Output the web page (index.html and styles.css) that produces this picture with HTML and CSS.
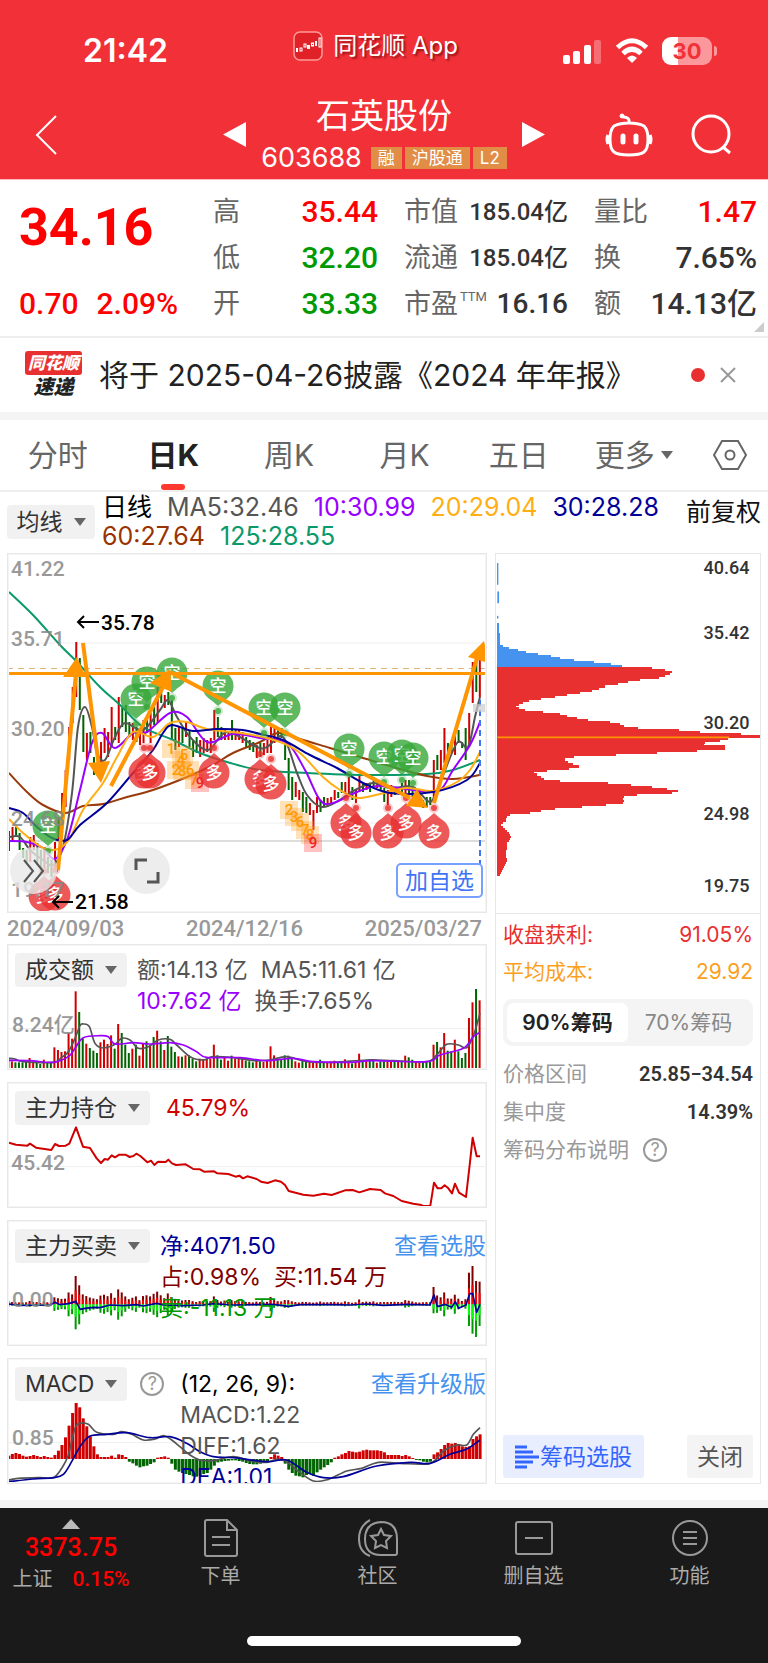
FILE: index.html
```html
<!DOCTYPE html>
<html lang="zh-CN">
<head>
<meta charset="utf-8">
<meta name="viewport" content="width=device-width, initial-scale=1">
<title>石英股份 603688</title>
<link rel="stylesheet" href="styles.css">
</head>
<body>
<header class="top">
  <div class="status">
    <span class="clock">21:42</span>
    <span class="app-name">
      <svg width="30" height="30" viewBox="0 0 30 30"><rect x="1" y="1" width="28" height="28" rx="6" fill="#e02228" stroke="#ff9a96" stroke-width="1.5"/><g fill="#fff"><rect x="3" y="17" width="2" height="4"/><rect x="14" y="14" width="3" height="4"/><rect x="22" y="10" width="2" height="5"/></g><g fill="none" stroke="#fff"><rect x="7" y="17" width="2" height="3"/><rect x="11" y="13" width="2" height="3"/><rect x="18.500" y="12" width="2" height="3"/><rect x="26" y="7" width="2" height="9"/></g></svg>
      <span>同花顺 App</span>
    </span>
    <span class="signals">
      <svg width="40" height="27" viewBox="0 0 40 27" fill="#fff"><rect x="1" y="17" width="7" height="9" rx="2"/><rect x="11" y="13" width="7" height="13" rx="2"/><rect x="22" y="7" width="7" height="19" rx="2"/><rect x="32" y="2" width="7" height="24" rx="2" opacity=".3"/></svg>
      <svg width="34" height="26" viewBox="0 0 34 26" fill="none" stroke="#fff" stroke-width="5"><path d="M2.500 9.500Q17-4 31.500 9.500"/><path d="M8 15.500Q17 7 26 15.500"/><path d="M17 25l-5-5q5-5 10 0z" fill="#fff" stroke="none"/></svg>
      <span class="battery">30</span>
    </span>
  </div>
  <div class="nav">
    <button class="icon-btn" aria-label="返回"><svg width="22" height="40" viewBox="0 0 22 40" fill="none" stroke="#fff" stroke-width="2"><path d="M21 1L2 20l19 19"/></svg></button>
    <div class="stock">
      <button class="icon-btn" aria-label="上一只"><svg width="23" height="25" viewBox="0 0 23 25"><path d="M23 0v25L0 12.500z" fill="#fff"/></svg></button>
      <div class="stock-id">
        <h1>石英股份</h1>
        <p><span class="code">603688</span><span class="tag">融</span><span class="tag">沪股通</span><span class="tag">L2</span></p>
      </div>
      <button class="icon-btn" aria-label="下一只"><svg width="23" height="25" viewBox="0 0 23 25"><path d="M0 0v25l23-12.500z" fill="#fff"/></svg></button>
    </div>
    <div class="nav-tools">
      <button class="icon-btn" aria-label="助手"><svg width="48" height="44" viewBox="0 0 48 44" fill="none" stroke="#fff" stroke-width="3"><path d="M9 13Q15 10 24 10t15 3Q43 17 43 26q0 10-4 13-4 3-15 3T9 39Q5 36 5 26q0-9 4-13zM24 10Q25 4 18 4M3 22q-2 4 0 9M45 22q2 4 0 9"/><circle cx="17" cy="3" r="2" fill="#fff" stroke-width="1"/><path d="M18 23v6M31 23v6" stroke-width="5" stroke-linecap="round"/></svg></button>
      <button class="icon-btn" aria-label="搜索"><svg width="42" height="42" viewBox="0 0 42 42" fill="none" stroke="#fff" stroke-width="3"><circle cx="20" cy="20" r="18"/><path d="M32 33l7 6"/></svg></button>
    </div>
  </div>
</header>

<main>
<section class="quote">
  <div class="price">
    <strong>34.16</strong>
    <p><span>0.70</span><span>2.09%</span></p>
  </div>
  <dl class="stats">
    <div><dt>高</dt><dd class="up">35.44</dd></div>
    <div><dt>低</dt><dd class="down">32.20</dd></div>
    <div><dt>开</dt><dd class="down">33.33</dd></div>
  </dl>
  <dl class="stats">
    <div><dt>市值</dt><dd class="small">185.04亿</dd></div>
    <div><dt>流通</dt><dd class="small">185.04亿</dd></div>
    <div><dt>市盈<sup>TTM</sup></dt><dd class="medium">16.16</dd></div>
  </dl>
  <dl class="stats">
    <div><dt>量比</dt><dd class="up">1.47</dd></div>
    <div><dt>换</dt><dd>7.65%</dd></div>
    <div><dt>额</dt><dd>14.13亿</dd></div>
  </dl>
</section>

<section class="news">
  <span class="news-logo"><b>同花顺</b><i>速递</i></span>
  <a href="#news">将于 2025-04-26披露《2024 年年报》</a>
  <span class="dot"></span>
  <button class="icon-btn" aria-label="关闭公告"><svg width="16" height="16" viewBox="0 0 16 16" stroke="#999" stroke-width="2"><path d="M1 1l14 14M15 1L1 15"/></svg></button>
</section>

<nav class="tabs">
  <button>分时</button><button class="active">日K</button><button>周K</button><button>月K</button><button>五日</button><button>更多<span class="caret"></span></button>
  <button aria-label="设置"><svg width="34" height="32" viewBox="0 0 34 32" fill="none" stroke="#666" stroke-width="2"><path d="M9 2h16l8 14-8 14H9L1 16z"/><circle cx="17" cy="16" r="4.500"/></svg></button>
</nav>

<section class="legend">
  <button class="picker">均线<span class="caret"></span></button>
  <p><span class="c-black">日线</span><span>MA5:32.46</span><span class="c-purple">10:30.99</span><span class="c-yellow">20:29.04</span><span class="c-navy">30:28.28</span><span class="c-brown">60:27.64</span><span class="c-teal">125:28.55</span></p>
  <button class="adjust">前复权</button>
</section>

<div class="board">
  <div class="charts">
    <section class="panel kline">
      <svg id="kline" viewBox="8 554 478 358"></svg>
      <button class="round more" aria-label="展开"><svg width="24" height="24" viewBox="0 0 24 24" fill="none" stroke="#555" stroke-width="2"><path d="M2 1l9 11-9 11M12 1l9 11-9 11"/></svg></button>
      <button class="round full" aria-label="全屏"><svg width="26" height="26" viewBox="0 0 26 26" fill="none" stroke="#555" stroke-width="3"><path d="M2 12V2h11M24 14v10H13"/></svg></button>
      <button class="add">加自选</button>
    </section>
    <div class="dates"><span>2024/09/03</span><span>2024/12/16</span><span>2025/03/27</span></div>
    <section class="panel">
      <svg id="volume" viewBox="24 45 1434 372"></svg>
      <div class="info">
        <button class="picker">成交额<span class="caret"></span></button>
        <p><span>额:14.13 亿</span><span>MA5:11.61 亿</span><br><span class="c-purple">10:7.62 亿</span><span>换手:7.65%</span></p>
      </div>
    </section>
    <section class="panel">
      <svg id="holding" viewBox="24 24 1434 372"></svg>
      <div class="info">
        <button class="picker">主力持仓<span class="caret"></span></button>
        <p class="inset"><span class="c-red">45.79%</span></p>
      </div>
    </section>
    <section class="panel">
      <svg id="flow" viewBox="24 438 1434 372"></svg>
      <div class="info">
        <button class="picker">主力买卖<span class="caret"></span></button>
        <p><span class="c-navy">净:4071.50</span><br><span class="c-maroon">占:0.98%</span><span class="c-maroon">买:11.54 万</span><br><span class="c-green">卖:-11.13 万</span></p>
        <a href="#pick">查看选股</a>
      </div>
    </section>
    <section class="panel">
      <svg id="macd" viewBox="24 42 1434 372"></svg>
      <div class="info">
        <button class="picker">MACD<span class="caret"></span></button>
        <button class="help" aria-label="MACD说明">?</button>
        <p class="inset"><span class="c-black">(12, 26, 9):</span><br><span>MACD:1.22</span><br><span>DIFF:1.62</span><br><span class="c-navy">DEA:1.01</span></p>
        <a href="#upgrade">查看升级版</a>
      </div>
    </section>
  </div>

  <aside class="chips">
    <svg id="chips" viewBox="46 43 789 1074"></svg>
    <div class="chip-info">
      <p class="profit"><span>收盘获利:</span><span>91.05%</span></p>
      <p class="cost"><span>平均成本:</span><span>29.92</span></p>
      <div class="segment"><button class="active">90%筹码</button><button>70%筹码</button></div>
      <p><span>价格区间</span><b>25.85−34.54</b></p>
      <p><span>集中度</span><b>14.39%</b></p>
      <p class="explain"><span>筹码分布说明</span><button class="help" aria-label="筹码分布说明">?</button></p>
    </div>
    <div class="chip-actions">
      <button class="pick"><svg width="24" height="24" viewBox="0 0 24 24" stroke="#3366ff" stroke-width="3"><path d="M0 2h12M0 7h18M0 12h24M0 17h18M0 22h12"/></svg>筹码选股</button>
      <button class="close">关闭</button>
    </div>
  </aside>
</div>
</main>

<footer class="dock">
  <div class="dock-row">
    <button class="index"><span class="tri"></span><strong>3373.75</strong><span class="index-row"><span>上证</span><b>0.15%</b></span></button>
    <button><svg width="36" height="38" viewBox="0 0 36 38" fill="none" stroke="#999" stroke-width="2"><path d="M4 1h20l10 10v24q0 2-2 2H4q-2 0-2-2V3q0-2 2-2zM24 1v10h10M9 18h18M9 26h18"/></svg>下单</button>
    <button><svg width="42" height="38" viewBox="0 0 42 38" fill="none" stroke="#999" stroke-width="2"><path d="M24 3q16 0 16 17v14q0 2-2 2H24Q8 36 8 20T24 3zM13 1Q2 7 2 20t11 17"/><path d="M24 10l3 6 7 1-5 5 1 7-6-3-6 3 1-7-5-5 7-1z"/></svg>社区</button>
    <button><svg width="40" height="38" viewBox="0 0 40 38" fill="none" stroke="#999" stroke-width="2"><rect x="2" y="3" width="36" height="32" rx="2"/><path d="M11 19h18"/></svg>删自选</button>
    <button><svg width="38" height="38" viewBox="0 0 38 38" fill="none" stroke="#999" stroke-width="2"><circle cx="19" cy="19" r="17"/><path d="M12 13h14M12 19h14M12 25h14"/></svg>功能</button>
  </div>
  <div class="home-bar"></div>
</footer>
<script src="charts.js"></script>
</body>
</html>
```

FILE: styles.css
```css
* { box-sizing: border-box; }
body, h1, p, dl, dd { margin: 0; }
body { background: #fff; color: #555; font: 400 22px/32px Inter, "Noto Sans CJK SC", sans-serif; }
button { border: 0; padding: 0; background: none; font: inherit; color: inherit; cursor: pointer; white-space: nowrap; }
a { text-decoration: none; color: inherit; white-space: nowrap; }
svg { display: block; flex: none; }
.icon-btn { display: flex; }

.top { background: #f23037; color: #fff; padding-top: 28px; height: 180px; border-bottom: 1px solid #fbb; }
.status { display: grid; grid-template-columns: 1fr auto 1fr; align-items: center; padding: 0 56px 0 83px; height: 46px; }
.clock { font-size: 32px; font-weight: 600; }
.app-name { display: flex; gap: 10px; align-items: center; font-size: 24px; text-shadow: 2px 2px 2px rgba(90, 0, 0, .6); padding-bottom: 10px; margin-right: 44px; }
.signals { display: flex; justify-content: flex-end; align-items: center; gap: 13px; }
.battery { position: relative; width: 50px; height: 28px; border-radius: 9px; background: linear-gradient(90deg, #fff 32%, #fa989b 32%); color: #f23037; font-weight: 700; line-height: 28px; text-align: center; }
.battery::after { content: ""; position: absolute; right: -5px; top: 9px; width: 3px; height: 10px; border-radius: 0 3px 3px 0; background: #fa989b; }
.nav { display: grid; grid-template-columns: 1fr auto 1fr; align-items: center; padding: 0 35px; height: 105px; }
.nav > :first-child { margin-top: 16px; }
.stock { display: flex; align-items: center; gap: 15px; }
.stock .icon-btn { margin-top: 16px; }
.stock-id { text-align: center; width: 246px; padding-top: 10px; }
.stock-id h1 { font-size: 34px; line-height: 52px; font-weight: 400; }
.stock-id p { display: flex; align-items: center; justify-content: center; gap: 3px; }
.code { font-size: 27px; margin-right: 6px; }
.tag { background: #e28d45; font-size: 17px; line-height: 22px; padding: 0 7px; }
.nav-tools { display: flex; justify-content: flex-end; align-items: center; gap: 38px; margin-top: 16px; }

.quote { display: grid; grid-template-columns: 168fr 165fr 164fr 163fr; column-gap: 26px; padding: 9px 11px 9px 19px; border-bottom: 2px solid #eee; position: relative; font-family: Roboto, "Noto Sans CJK SC", sans-serif; }
.quote::after { content: ""; position: absolute; right: 4px; bottom: 4px; border: solid transparent; border-width: 10px 0 0 10px; border-bottom: 10px solid #ccc; border-top: 0; }
.price { color: #f00; display: flex; flex-direction: column; justify-content: space-between; }
.price strong { font-size: 52px; line-height: 78px; font-weight: 700; }
.price p { display: flex; gap: 18px; font-size: 30px; font-weight: 500; line-height: 46px; }
.stats div { display: flex; justify-content: space-between; align-items: center; height: 46px; white-space: nowrap; }
.stats dt { font-size: 27px; color: #666; }
.stats dd { font-size: 30px; font-weight: 500; color: #333; }
.stats sup { font-size: 13px; line-height: 0; margin-left: 2px; vertical-align: 12px; }
.stats .small { font-size: 24px; }
.stats .medium { font-size: 28px; }
.stats .up { color: #f00; }
.stats .down { color: #090; }

.news { display: flex; align-items: center; height: 82px; padding: 0 32px 0 25px; border-bottom: 8px solid #f4f4f4; color: #222; }
.news-logo { display: flex; flex-direction: column; align-items: center; width: 57px; margin-right: 17px; font-style: italic; line-height: 24px; }
.news-logo b { background: #e93030; color: #fff; font-size: 17px; font-weight: 900; width: 57px; text-align: center; border-radius: 3px; }
.news-logo i { font-size: 20px; font-weight: 900; }
.news a { font-size: 30px; line-height: 44px; flex: 1; }
.dot { width: 14px; height: 14px; border-radius: 50%; background: #e93030; margin-right: 15px; }

.tabs { display: grid; grid-template-columns: 115fr 115fr 115fr 115fr 112fr 117fr 75fr; height: 72px; border-bottom: 2px solid #eee; font-size: 30px; color: #666; }
.tabs button { display: flex; align-items: center; justify-content: center; gap: 6px; position: relative; }
.tabs .active { color: #222; font-weight: 700; }
.tabs .active::after { content: ""; position: absolute; bottom: 0; left: 50%; margin-left: -12px; width: 24px; height: 6px; border-radius: 3px; background: #ff3830; }
.caret { border: 6px solid transparent; border-top: 8px solid #666; border-bottom: 0; }

.legend { display: flex; justify-content: space-between; height: 61px; padding: 0 7px; font-size: 25px; line-height: 29px; }
.legend .picker { margin-top: 13px; width: 88px; }
.legend p { flex: 1; padding-left: 7px; padding-top: 1px; display: flex; flex-wrap: wrap; column-gap: 15px; align-content: flex-start; }
.adjust { color: #111; height: 40px; }
.picker { display: flex; flex: none; align-items: center; justify-content: center; gap: 11px; height: 34px; padding: 0 10px; background: #f1f1f1; border-radius: 4px; color: #333; font-size: 23px; line-height: 34px; }
.c-black { color: #000; }
.c-purple { color: #90f; }
.c-yellow { color: #ffae13; }
.c-navy { color: #009; }
.c-brown { color: #930; }
.c-teal { color: #0a9968; }
.c-red { color: #d00000; }
.c-maroon { color: #800000; }
.c-green { color: #090; }

.board { display: grid; grid-template-columns: 480fr 266fr; gap: 8px; padding: 0 7px 16px; border-bottom: 8px solid #f4f4f4; }
.charts { display: flex; flex-direction: column; gap: 12px; min-width: 0; }
.panel { position: relative; border: 1px solid #e8e8e8; outline: 1px solid #f4f4f4; outline-offset: -2px; overflow: hidden; }
.panel > svg { width: 100%; }
svg text { font-family: Roboto, "Noto Sans CJK SC", sans-serif; font-weight: 500; }
.dates { display: flex; justify-content: space-between; margin: -12px 5px -12px 0; font: 500 22px/31px Roboto, sans-serif; color: #999; }
.round { position: absolute; bottom: 18px; width: 47px; height: 47px; border-radius: 50%; background: rgba(232, 232, 232, .8); display: flex; align-items: center; justify-content: center; }
.more { left: 2px; }
.full { left: 115px; }
.add { position: absolute; right: 3px; bottom: 14px; width: 87px; height: 35px; border: 2px solid #78a0ff; border-radius: 5px; background: #fff; color: #3f74f5; font-size: 23px; line-height: 30px; }
.info { position: absolute; inset: 8px 0 0 7px; display: flex; align-items: flex-start; font-size: 23px; line-height: 31px; }
.info p { margin-left: 10px; white-space: nowrap; flex: 1; min-width: 0; padding-top: 2px; }
.info .inset { margin-left: 16px; }
.info p span { margin-right: 13px; }
.info a { color: #4593ee; margin-top: 2px; }
.help { width: 24px; height: 24px; border: 2px solid #999; border-radius: 50%; color: #999; font-size: 18px; line-height: 20px; flex: none; }
.info .help { margin: 5px 0 0 13px; }

.chips { display: flex; flex-direction: column; border: 1px solid #e8e8e8; min-width: 0; }
.chips > svg { width: 100%; border-bottom: 1px solid #e8e8e8; }
.chip-info { padding: 2px 7px; flex: 1; font-size: 21px; color: #999; }
.chip-info p { display: flex; justify-content: space-between; align-items: center; line-height: 38px; }
.chip-info b { font: 600 20px Roboto, sans-serif; color: #333; }
.chip-info .profit, .chip-info .cost { line-height: 37px; color: #e93030; }
.chip-info .cost { color: #fc9f1e; }
.chip-info .explain { justify-content: flex-start; gap: 14px; }
.segment { display: grid; grid-template-columns: 1fr 1fr; background: #f4f4f4; border-radius: 9px; padding: 4px; height: 47px; margin: 9px 0; color: #888; }
.segment .active { background: #fff; border-radius: 7px; color: #222; font-weight: 600; }
.chip-actions { display: flex; justify-content: space-between; padding: 0 7px 5px; font-size: 23px; }
.chip-actions button { height: 43px; border-radius: 3px; }
.pick { display: flex; align-items: center; gap: 1px; padding: 0 12px; background: #e8eefe; color: #3366ff; }
.close { padding: 0 10px; background: #f4f4f4; color: #555; }

.dock { background: #1a1a1a; color: #aaa; height: 155px; display: flex; flex-direction: column; justify-content: space-between; align-items: center; padding-bottom: 17px; }
.dock-row { width: 100%; display: grid; grid-template-columns: 142fr 157fr 157fr 155fr 157fr; font-size: 20px; }
.dock-row button { display: flex; flex-direction: column; align-items: center; line-height: 28px; gap: 5px; padding-top: 11px; }
.dock-row .index { gap: 0; color: #aaa; line-height: 32px; }
.tri { border: 9px solid transparent; border-bottom: 10px solid #bbb; border-top: 0; margin-bottom: 3px; }
.index strong { font: 500 25px/32px Roboto, sans-serif; color: #f00; }
.index b { font: 500 21px/30px Roboto, sans-serif; color: #f00; }
.index-row { display: flex; gap: 20px; line-height: 30px; }
.home-bar { width: 274px; height: 10px; border-radius: 5px; background: #fff; }
```

FILE: charts.js
```js
const RED = '#d00000', GREEN = '#006400';

// One entry per trading day: colour, traded amount
const days = 'R30 R20 G17 G17 G17 G18 R30 R20 G20 G12 R25 G18 G15 R62 R54 R48 R50 R105 R88 R230 G168 G88 R73 G60 G52 G45 R77 R85 R72 R98 G58 R132 G105 G70 G45 R58 G70 R37 R73 G80 R70 G93 R112 G80 R54 G96 G64 G48 R35 G34 R38 G38 G28 G20 R28 R26 R28 R28 R70 G38 G25 R33 R22 G37 R28 R27 R28 G22 G20 G17 R24 G20 R18 R22 R65 R38 G28 G26 G38 G37 G27 R20 R16 G22 G20 R18 R15 R18 G25 G18 R18 R20 R22 G18 G16 R26 R20 G14 R18 R43 G20 R24 G22 G26 R16 G20 G20 R20 R20 G22 R20 G20 R37 G32 G25 R18 R16 G18 G20 G18 R70 G78 R62 R105 G52 G50 R85 G50 G30 G45 R150 R197 G237 R203'
  .split(' ').map(s => ({ color: s[0] === 'R' ? RED : GREEN, amount: +s.slice(1) }));

// Day high and low positions
const ranges = '831-851 827-842 827-837 833-850 848-858 850-862 837-862 835-850 843-865 850-873 847-868 857-873 860-877 842-872 817-840 793-823 770-807 727-760 687-723 642-697 658-710 715-752 733-760 732-753 757-775 762-775 742-767 728-753 732-757 707-747 727-740 697-743 708-727 705-732 722-737 723-740 727-742 728-745 720-743 715-733 713-743 707-725 687-723 685-703 695-708 692-705 700-740 728-750 727-747 728-743 722-737 730-747 740-757 737-753 740-757 738-753 740-752 738-753 710-740 717-737 727-740 730-740 732-740 720-740 730-740 730-740 732-743 737-747 740-750 742-752 745-758 743-757 743-755 740-753 727-753 727-743 728-737 728-738 743-760 758-790 777-800 782-797 790-800 792-812 797-813 803-815 810-830 797-813 800-812 797-807 798-806 797-804 790-800 792-798 782-793 782-793 777-797 787-800 790-803 775-792 783-792 783-790 783-792 777-787 780-788 782-790 788-802 790-805 785-797 788-795 787-793 783-793 780-797 780-795 788-797 792-797 793-800 800-808 797-807 797-805 760-800 755-770 750-770 728-763 743-752 743-753 728-755 730-743 742-748 728-760 713-747 662-703 660-692 653-697'
  .split(' ').map(s => s.split('-').map(Number));

const macd = [10,15,18,15,10,7,9,12,9,6,9,6,4,12,25,42,65,100,138,168,155,122,98,68,38,14,6,6,6,10,4,14,12,6,-8,-13,-20,-25,-22,-20,-15,-10,4,6,8,4,-14,-32,-38,-42,-45,-48,-52,-53,-50,-45,-42,-32,-20,-10,-8,-6,-5,-4,-4,-6,-8,-12,-15,-16,-16,-14,-10,-6,6,14,10,6,-14,-32,-42,-50,-52,-55,-48,-45,-50,-40,-32,-25,-18,-10,4,8,14,18,24,22,20,22,26,28,26,26,26,24,20,12,12,12,12,9,12,8,3,-3,-4,-8,-10,-8,14,20,30,42,48,46,48,45,38,36,38,60,68,74];

const parse = s => s.split(' ').map(p => p.split(',').map(Number));
const rect = (x, y, w, h, fill, extra = '') => `<rect x="${x}" y="${y}" width="${w}" height="${h}" fill="${fill}" ${extra}/>`;
const hline = (x1, x2, y, color, w) => `<path d="M${x1} ${y}H${x2}" stroke="${color}" stroke-width="${w}"/>`;
const text = (x, y, s, size, fill, extra = '') => `<text x="${x}" y="${y}" font-size="${size}" fill="${fill}" ${extra}>${s}</text>`;
const straight = (pts, color, w) => `<polyline points="${pts}" fill="none" stroke="${color}" stroke-width="${w}" stroke-linejoin="round"/>`;

// Curve through every point
function smooth(pts, color, w) {
  const p = parse(pts);
  let d = `M${p[0]}`;
  for (let i = 0; i < p.length - 1; i++) {
    const a = p[i - 1] || p[i], b = p[i], c = p[i + 1], e = p[i + 2] || c;
    d += `C${b[0] + (c[0] - a[0]) / 6} ${b[1] + (c[1] - a[1]) / 6} ${c[0] - (e[0] - b[0]) / 6} ${c[1] - (e[1] - b[1]) / 6} ${c}`;
  }
  return `<path d="${d}" fill="none" stroke="${color}" stroke-width="${w}"/>`;
}
const draw = (id, html) => { document.getElementById(id).innerHTML = html; };

function pin(x, y, long) {
  const c = long ? '#e93030' : '#37a83a', s = long ? -1 : 1;
  return `<g fill="${c}"><g opacity=".8"><circle cx="${x}" cy="${y}" r="15.500"/><path d="M${x - 8} ${y + s * 13}L${x} ${y + s * 20}L${x + 8} ${y + s * 13}z"/></g><circle cx="${x}" cy="${y + s * 25}" r="5" opacity=".25"/><circle cx="${x}" cy="${y + s * 25}" r="3" opacity=".8"/></g>`
    + text(x, y + 6, long ? '多' : '空', 17, '#fff', 'text-anchor="middle"');
}
function badge(x, y, n) {
  const hot = n === 9;
  return rect(x - 9, y - 9, 18, 18, hot ? '#f33' : '#ff9d1c', 'opacity=".3"') + text(x, y + 5, n, 15, hot ? '#e22' : '#f90', 'text-anchor="middle"');
}

let k = hline(7, 487, 643, '#eee', 1) + hline(7, 487, 733, '#eee', 1) + hline(7, 487, 823, '#eee', 1) + hline(7, 487, 841, '#ddd', 2);
k += '<path d="M7 668.500H487" stroke="#e0b47c" stroke-dasharray="6 5"/>';
ranges.forEach(([a, b], i) => { k += rect(8 + i * 3.54, a, 2, b - a, days[i].color); });
k += smooth('9,592 33,615 60,645 77,662 100,687 120,705 143,727 173,740 200,753 227,762 260,770 307,773 367,775 427,774 453,770 480,760', '#0a9968', 2);
k += smooth('9,773 27,792 43,805 65,813 83,806 103,804 127,797 153,790 187,777 213,765 233,753 260,742 278,733 300,739 330,748 360,757 393,767 427,776 453,779 480,775', '#993a0a', 2);
k += smooth('9,837 20,837 30,850 43,860 53,865 63,847 72,793 78,727 85,707 92,727 97,753 105,760 115,737 125,723 143,730 160,710 168,700 177,717 190,737 208,750 227,732 257,747 267,747 283,737 297,773 307,795 322,807 340,800 353,791 373,783 390,788 413,787 430,802 440,783 457,743 468,747 475,717 480,697', '#555', 2);
k += smooth('9,841 27,842 43,848 55,859 68,837 80,790 92,743 102,733 115,748 133,733 147,732 170,713 187,717 207,742 233,734 260,738 287,743 305,770 320,800 333,803 357,792 380,786 420,791 440,790 453,770 470,745 480,722', '#90f', 2);
k += smooth('9,819 23,833 43,848 58,849 70,838 83,810 103,783 117,757 133,732 153,737 170,723 187,722 207,729 247,734 280,742 300,753 323,777 340,790 357,798 380,794 407,788 433,791 457,782 470,770 480,752', '#ffae13', 2);
k += smooth('9,808 23,813 37,827 52,838 67,840 80,825 107,803 133,773 153,750 163,733 172,725 193,731 217,729 243,730 260,734 283,740 310,755 337,768 363,783 390,793 433,792 467,780 480,763', '#009', 2);
[[171,749,1],[184,755,5],[181,760,4],[176,770,2],[182,771,8],[190,770,6],[194,780,7],[200,783,9],[289,810,2],[294,817,3],[300,822,6],[305,830,7],[310,835,8],[313,843,9]].forEach(b => { k += badge(...b); });
[[48,826],[136,699],[147,682],[172,673],[218,686],[264,708],[285,708],[349,749],[384,757],[402,755],[413,758]].forEach(([x, y]) => { k += pin(x, y, false); });
[[44,896],[55,895],[144,773],[150,773],[214,773],[260,779],[271,784],[346,823],[356,833],[388,833],[406,823],[434,833]].forEach(([x, y]) => { k += pin(x, y, true); });
k += '<path d="M480 700V865" stroke="#3f74f5" stroke-width="2" stroke-dasharray="6 4"/>' + rect(473, 704, 14, 8, '#ccc', 'opacity=".7"');
k += hline(7, 487, 673.5, '#ff9500', 3);
k += '<path d="M58 870L77 662M83 643l17 132M111 786l52-99M170 672l240 126M434 803l43-145" stroke="#ff9500" stroke-width="4" fill="none"/><path d="M63 677h23l-9-20zM88 763l22-2-9 22zM150 683l22 9-2-23zM406 806l22 2-11-19zM468 657l21 6-5-22z" fill="#ff9500"/>';
[['41.22',576],['35.71',646],['30.20',736],['24.68',826],['19.17',897]].forEach(([s, y]) => { k += text(11, y, s, 21, '#888', 'opacity=".85"'); });
k += text(101, 630, '35.78', 21, '#000') + text(75, 909, '21.58', 21, '#000');
k += '<path d="M99 622H78M84 616l-6 6 6 6M73 902H53M59 896l-6 6 6 6" fill="none" stroke="#000" stroke-width="2"/>';
draw('kline', k);

const x0 = i => 22 + i * 10.63;
let v = hline(21, 1463, 296, '#eee', 3);
days.forEach((d, i) => { v += rect(x0(i), 414 - d.amount, 6, d.amount, d.color); });
v += smooth('25,385 45,387 70,395 160,397 185,382 205,365 225,325 240,287 250,282 268,290 285,340 310,354 345,343 365,325 390,330 415,355 445,350 475,330 510,328 530,345 570,380 610,390 640,380 700,383 760,392 810,390 860,380 920,395 1000,397 1100,390 1180,392 1280,395 1310,375 1340,343 1375,345 1400,353 1420,318 1440,250', '#555', 5);
v += smooth('25,391 90,392 160,397 205,380 225,355 250,323 300,317 325,320 345,342 400,338 450,342 510,338 550,345 590,365 620,382 720,383 800,392 880,385 940,395 1050,397 1120,392 1280,395 1320,375 1390,355 1420,320 1440,307', '#90f', 5);
v += text(36, 306, '8.24亿', 63, '#888', 'opacity=".85"');
draw('volume', v);

draw('holding', hline(21, 1463, 275, '#eee', 3)
  + text(34, 285, '45.42', 63, '#888', 'opacity=".85"')
  + straight('27,203 48,209 82,212 90,206 108,218 154,225 165,207 177,213 197,212 208,206 228,157 249,215 270,219 290,250 303,264 314,252 324,254 335,241 345,247 358,239 376,239 389,246 400,243 409,236 421,243 442,262 453,257 463,270 474,260 497,261 505,254 516,265 528,270 557,268 580,282 600,283 612,290 642,289 652,295 685,297 707,305 718,302 729,310 742,304 770,312 783,320 803,324 825,316 843,320 855,330 866,348 910,359 940,362 972,356 995,360 1035,346 1058,345 1078,352 1110,342 1142,345 1155,355 1180,363 1205,378 1240,386 1260,389 1270,393 1291,392 1302,323 1313,340 1324,340 1334,331 1345,340 1356,355 1365,326 1377,353 1398,366 1409,270 1418,188 1430,244 1440,244', RED, 6));

const upLevels = { 19: 85, 120: 52, 130: 95, 131: 115, 132: 70, 133: 68 };
const downLevels = { 19: 75, 120: 27, 130: 65, 131: 88, 132: 98, 133: 65 };
let f = hline(21, 1463, 688, '#eee', 3);
days.forEach((d, i) => {
  const up = upLevels[i] || d.amount * .34, down = downLevels[i] || Math.max(4, d.amount * .38 - 4);
  f += rect(x0(i), 688 - up, 6, up, '#800000') + rect(x0(i), 688 - up * .5, 6, up * .5, '#f00');
  f += rect(x0(i), 688, 6, down, '#090') + rect(x0(i), 688, 6, down * .5, '#0f0');
});
f += straight('25,687 60,691 150,690 165,682 180,689 205,686 228,679 240,703 255,700 280,697 300,698 330,690 370,692 410,689 430,693 470,685 490,690 550,692 610,690 640,686 700,690 820,688 866,694 900,689 1000,689 1050,690 1100,687 1150,691 1220,688 1290,690 1302,660 1312,695 1335,688 1355,697 1366,680 1376,700 1398,690 1409,656 1418,656 1430,712 1440,688', '#009', 5);
f += text(36, 697, '0.00', 63, '#888', 'opacity=".85"');
draw('flow', f);

let m = hline(21, 1463, 293, '#eee', 3);
macd.forEach((h, i) => { m += rect(x0(i), h > 0 ? 342 - h : 342, 9, Math.abs(h), h > 0 ? RED : GREEN); });
m += smooth('27,405 55,400 120,398 160,398 185,370 205,330 225,250 240,235 265,238 290,262 340,268 365,260 395,268 430,285 465,282 490,272 515,285 540,305 570,330 600,345 640,347 700,335 760,350 800,352 830,343 860,350 890,375 940,408 985,403 1040,378 1085,370 1135,352 1200,355 1290,355 1330,318 1370,300 1400,300 1420,268 1440,248', '#555', 5);
m += smooth('27,410 100,402 160,398 190,388 215,350 240,305 270,273 320,268 380,263 450,278 510,275 560,295 600,320 640,335 700,338 800,350 860,345 920,382 970,398 1030,395 1130,363 1230,352 1290,355 1350,328 1400,312 1440,285', '#009', 5);
m += text(36, 300, '0.85', 63, '#888', 'opacity=".85"');
draw('macd', m);

// Holding cost distribution, one thin row per price step
function rows(profile, from, to, color) {
  const p = parse(profile);
  let out = '';
  for (let y = from; y < to; y += 6) {
    const j = Math.max(1, p.findIndex(q => q[1] >= y + 3));
    const a = p[j - 1], b = p[j];
    const t = b[1] === a[1] ? 1 : Math.min(1, Math.max(0, (y + 3 - a[1]) / (b[1] - a[1])));
    out += rect(50, y, a[0] + (b[0] - a[0]) * t - 50, 7, color, 'shape-rendering="crispEdges"');
  }
  return out;
}
let c = rect(49, 70, 4, 65, '#4593ee') + rect(50, 155, 5, 35, '#4593ee') + rect(49, 228, 4, 8, '#4593ee');
c += rows('54,250 57,290 58,312 70,322 115,332 150,340 185,345 218,350 250,358 298,363 348,368 398,374 447,384', 250, 381, '#4593ee');
c += rows('480,380 545,388 577,397 550,408 530,415 455,422 425,430 360,440 345,448 285,458 245,464 210,470 150,478 120,488 102,500 140,512 230,520 265,530 320,540 410,548 430,558 490,567 592,570 665,577 778,582 840,588 743,593 715,600 680,604 652,610 690,615 755,620 712,627 602,632 508,637 385,643 280,648 248,655 262,668 302,680 235,687 172,692 158,695 180,708 192,717 268,722 410,727 458,733 535,740 589,750 565,758 442,763 422,770 432,785 385,791 320,797 235,802 180,810 170,815 100,818 80,825 75,840 60,850 93,886 80,905 75,945 80,955 65,985 58,1005 50,1012', 381, 1005, '#e93030');
c += hline(50, 743, 591, '#ff9500', 5);
[['40.64',103],['35.42',296],['30.20',567],['24.98',837],['19.75',1053]].forEach(([s, y]) => { c += text(804, y, s, 54, '#333', 'text-anchor="end"'); });
draw('chips', c);
```
